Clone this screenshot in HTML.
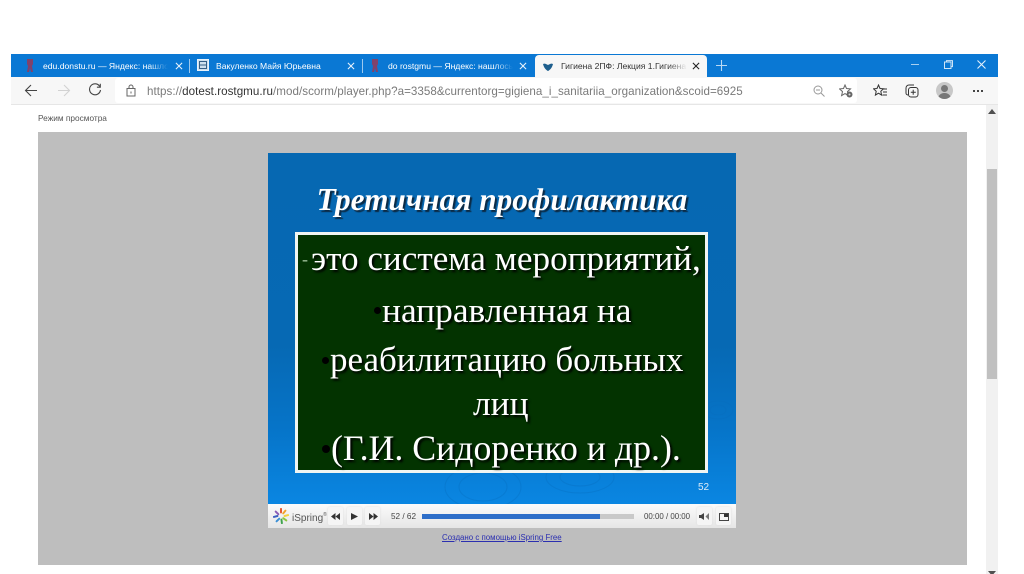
<!DOCTYPE html>
<html lang="ru">
<head>
<meta charset="utf-8">
<title>Третичная профилактика</title>
<style>
html,body{margin:0;padding:0;background:#fff;}
#p{position:relative;width:1024px;height:574px;overflow:hidden;background:#fff;font-family:"Liberation Sans","Noto Sans CJK SC",sans-serif;filter:blur(.35px);}
#p div,#p span.a,#p svg{position:absolute;}
.t{white-space:nowrap;}
.fade{-webkit-mask-image:linear-gradient(90deg,#000 85%,transparent);mask-image:linear-gradient(90deg,#000 85%,transparent);}
.serif{font-family:"Liberation Serif","Noto Serif CJK SC",serif;}
.line{color:#fff;line-height:40px;white-space:nowrap;text-shadow:2px 2px 2px #000;}
.btn{background:#f5f5f5;border-radius:2px;box-shadow:0 0 2px #ddd;}
</style>
</head>
<body>
<div id="p">
  <!-- tab strip -->
  <div style="left:11px;top:54px;width:987px;height:23px;background:#0a78d4;"></div>
  <!-- active tab -->
  <div style="left:535px;top:55px;width:172px;height:22px;background:#f7f7f7;border-radius:4px 4px 0 0;"></div>

  <!-- tab 1 -->
  <svg style="left:25px;top:58px;" width="10" height="15" viewBox="0 0 10 15"><path d="M2 1h6v5l-1 2 1 6H6L5 10 4 14H2l1-6-1-2z" fill="#a83048" opacity=".75"/></svg>
  <div class="t fade" style="left:43px;top:60px;width:125px;overflow:hidden;font-size:8.6px;line-height:12px;color:#fff;">edu.donstu.ru — Яндекс: нашло</div>
  <svg style="left:175px;top:62px;" width="8" height="8" viewBox="0 0 9 9"><path d="M1 1l7 7M8 1L1 8" stroke="#e8f2fb" stroke-width="1.2"/></svg>
  <div style="left:189px;top:59px;width:1px;height:14px;background:#9cc8ee;"></div>

  <!-- tab 2 -->
  <svg style="left:197px;top:59px;" width="12" height="12" viewBox="0 0 12 12"><rect x=".5" y=".5" width="11" height="11" fill="#cfe0ee" stroke="#e8f2fb"/><rect x="2.5" y="2.5" width="7" height="7" fill="none" stroke="#355f86"/><path d="M3 6h6" stroke="#355f86"/></svg>
  <div class="t" style="left:216px;top:60px;font-size:8.6px;line-height:12px;color:#fff;">Вакуленко Майя Юрьевна</div>
  <svg style="left:347px;top:62px;" width="8" height="8" viewBox="0 0 9 9"><path d="M1 1l7 7M8 1L1 8" stroke="#e8f2fb" stroke-width="1.2"/></svg>
  <div style="left:362px;top:59px;width:1px;height:14px;background:#9cc8ee;"></div>

  <!-- tab 3 -->
  <svg style="left:370px;top:58px;" width="10" height="15" viewBox="0 0 10 15"><path d="M2 1h6v5l-1 2 1 6H6L5 10 4 14H2l1-6-1-2z" fill="#a83048" opacity=".75"/></svg>
  <div class="t fade" style="left:388px;top:60px;width:125px;overflow:hidden;font-size:8.6px;line-height:12px;color:#fff;">do rostgmu — Яндекс: нашлось</div>
  <svg style="left:519px;top:62px;" width="8" height="8" viewBox="0 0 9 9"><path d="M1 1l7 7M8 1L1 8" stroke="#e8f2fb" stroke-width="1.2"/></svg>

  <!-- tab 4 -->
  <svg style="left:543px;top:62px;" width="10" height="9" viewBox="0 0 10 9"><path d="M0 2c2-1 3 0 5 1 2-1 3-2 5-1-1 4-3 6-5 7C3 8 1 6 0 2z" fill="#1e5f8e"/></svg>
  <div class="t fade" style="left:561px;top:60px;width:126px;overflow:hidden;font-size:8.6px;line-height:12px;color:#333;">Гигиена 2ПФ: Лекция 1.Гигиена</div>
  <svg style="left:692px;top:62px;" width="8" height="8" viewBox="0 0 9 9"><path d="M1 1l7 7M8 1L1 8" stroke="#222" stroke-width="1.2"/></svg>
  <svg style="left:716px;top:60px;" width="11" height="11" viewBox="0 0 11 11"><path d="M5.5 0v11M0 5.5h11" stroke="#b9d9f3" stroke-width="1.1"/></svg>

  <!-- window controls -->
  <div style="left:911px;top:64px;width:8px;height:1px;background:#a9d0f0;"></div>
  <svg style="left:944px;top:60px;" width="9" height="9" viewBox="0 0 9 9"><rect x=".5" y="2" width="6.5" height="6.5" fill="none" stroke="#cfe4f6"/><path d="M2.5 2V.6h6v6H7" fill="none" stroke="#cfe4f6"/></svg>
  <svg style="left:977px;top:60px;" width="9" height="9" viewBox="0 0 9 9"><path d="M.5.5l8 8M8.500.5l-8 8" stroke="#e3f0fb" stroke-width="1.1"/></svg>

  <!-- toolbar -->
  <div style="left:11px;top:77px;width:987px;height:27px;background:#f7f7f7;border-bottom:1px solid #e6e6e6;"></div>
  <div style="left:115px;top:78px;width:742px;height:25px;background:#fff;border-radius:3px;"></div>
  <svg style="left:24px;top:84px;" width="14" height="13" viewBox="0 0 14 13"><path d="M13 6.500H1.500M7 1 1.500 6.500 7 12" fill="none" stroke="#444" stroke-width="1.1"/></svg>
  <svg style="left:57px;top:84px;" width="14" height="13" viewBox="0 0 14 13"><path d="M1 6.500h11.500M7 1l5.500 5.500L7 12" fill="none" stroke="#d2d2d2" stroke-width="1.1"/></svg>
  <svg style="left:88px;top:83px;" width="14" height="14" viewBox="0 0 14 14"><path d="M11.800 3.500A5.500 5.500 0 1 0 12.500 7" fill="none" stroke="#444" stroke-width="1.1"/><path d="M12.300 .8v3.400H8.900" fill="none" stroke="#444" stroke-width="1.1"/></svg>
  <svg style="left:126px;top:84px;" width="10" height="13" viewBox="0 0 10 13"><rect x="1" y="4.500" width="8" height="7.500" fill="none" stroke="#666"/><path d="M3 4.500V3a2 2 0 0 1 4 0v1.500" fill="none" stroke="#666"/><rect x="4.500" y="7.500" width="1" height="2" fill="#666"/></svg>
  <div class="t" style="left:147px;top:84px;font-size:11.6px;line-height:15px;color:#7a7a7a;letter-spacing:.04px;">https://<span style="color:#333;">dotest.rostgmu.ru</span>/mod/scorm/player.php?a=3358&amp;currentorg=gigiena_i_sanitariia_organization&amp;scoid=6925</div>

  <!-- toolbar icons -->
  <svg style="left:813px;top:85px;" width="12" height="12" viewBox="0 0 12 12"><circle cx="5" cy="5" r="4" fill="none" stroke="#999"/><path d="M8 8l3.500 3.500M3 5h4" stroke="#999"/></svg>
  <svg style="left:839px;top:84px;" width="14" height="14" viewBox="0 0 14 14"><path d="M6 1l1.500 3.500 4 .4-3 2.700.9 4-3.400-2-3.400 2 .9-4-3-2.700 4-.4z" fill="none" stroke="#666"/><circle cx="10.500" cy="10.500" r="3" fill="#666"/><circle cx="10.500" cy="10.500" r="1" fill="#ddd"/></svg>
  <svg style="left:873px;top:84px;" width="14" height="14" viewBox="0 0 14 14"><path d="M5.500 1 7 4.500l3.500.3-2.700 2.500.8 3.800-3.100-1.900-3.100 1.900.8-3.800L.5 4.800 4 4.500z" fill="none" stroke="#333"/><path d="M9.500 5H14M10 8h4M9.500 11H14" stroke="#333" stroke-width=".9"/></svg>
  <svg style="left:905px;top:84px;" width="14" height="14" viewBox="0 0 14 14"><path d="M3 11a2 2 0 0 1-2-2V4a3 3 0 0 1 3-3h5" fill="none" stroke="#333"/><rect x="3.500" y="3.500" width="9.500" height="9.500" rx="2.500" fill="none" stroke="#333"/><path d="M8.200 5.800v5M5.800 8.200h5" stroke="#333"/></svg>
  <div style="left:936px;top:82px;width:17px;height:17px;border-radius:50%;background:#c8c8c8;overflow:hidden;">
    <div style="left:5px;top:3px;width:7px;height:7px;border-radius:50%;background:#777;"></div>
    <div style="left:2px;top:11px;width:13px;height:8px;border-radius:6px 6px 0 0;background:#777;"></div>
  </div>
  <div style="left:973px;top:90px;width:2px;height:2px;background:#444;box-shadow:4px 0 0 #444,8px 0 0 #444;"></div>

  <!-- page -->
  <div class="t" style="left:38px;top:112px;font-size:8.300px;line-height:12px;color:#555;">Режим просмотра</div>

  <!-- scrollbar -->
  <div style="left:986px;top:105px;width:12px;height:469px;background:#f1f1f1;"></div>
  <div style="left:987px;top:169px;width:10px;height:210px;background:#c0c0c0;"></div>
  <svg style="left:988px;top:109px;" width="8" height="5" viewBox="0 0 8 5"><path d="M4 0 8 5H0z" fill="#505050"/></svg>
  <svg style="left:988px;top:571px;" width="8" height="3" viewBox="0 0 8 3"><path d="M0 0h8L5.500 3h-3z" fill="#505050"/></svg>

  <!-- player background -->
  <div style="left:38px;top:132px;width:929px;height:433px;background:#bebebe;"></div>

  <!-- slide -->
  <div style="left:268px;top:153px;width:468px;height:351px;overflow:hidden;background:linear-gradient(180deg,#0668b2 0%,#0669b4 55%,#0674c8 78%,#0a86e2 100%);">
    <svg style="left:0;top:0;" width="468" height="351" viewBox="0 0 468 351" fill="none" stroke="#0a6cbc" stroke-opacity=".35">
      <ellipse cx="215" cy="334" rx="24" ry="14"/><ellipse cx="215" cy="334" rx="38" ry="22"/>
      <ellipse cx="312" cy="324" rx="20" ry="9"/><ellipse cx="312" cy="324" rx="34" ry="16"/>
      <ellipse cx="450" cy="257" rx="8" ry="5"/><ellipse cx="450" cy="257" rx="15" ry="9"/>
    </svg>
    <div class="t serif" style="left:0;width:468px;top:27px;text-align:center;font-size:31.3px;line-height:40px;font-weight:bold;font-style:italic;color:#fff;text-shadow:2px 2px 1px #0c2a44;">Третичная профилактика</div>
    <div style="left:27px;top:79px;width:407px;height:235px;border:3px solid #f1f5f2;background:#033300;"></div>
    <div class="t" style="left:430px;top:329px;font-size:10px;line-height:12px;color:#dcebf7;">52</div>

    <div class="line serif" style="left:34px;top:86px;font-size:18px;color:#9fc09a;text-shadow:none;">-</div>
    <div class="line serif" style="left:43px;top:86px;font-size:35.15px;">это система мероприятий,</div>
    <div class="line serif" style="left:114px;top:137px;font-size:35.4px;"><span style="position:absolute;left:-8px;top:17px;width:7px;height:7px;border-radius:50%;background:#000;"></span>направленная на</div>
    <div class="line serif" style="left:62px;top:187px;font-size:35px;"><span style="position:absolute;left:-8px;top:17px;width:7px;height:7px;border-radius:50%;background:#000;"></span>реабилитацию больных</div>
    <div class="line serif" style="left:205px;top:230px;font-size:35.4px;">лиц</div>
    <div class="line serif" style="left:63px;top:275px;font-size:35.8px;"><span style="position:absolute;left:-9px;top:17px;width:8px;height:8px;border-radius:50%;background:#000;"></span>(Г.И. Сидоренко и др.).</div>
  </div>

  <!-- control bar -->
  <div style="left:268px;top:504px;width:468px;height:24px;background:linear-gradient(180deg,#fbfbfb,#e6e6e6);"></div>
  <svg style="left:273px;top:508px;" width="16" height="16" viewBox="0 0 18 18" stroke-width="2.200" stroke-linecap="round">
    <path d="M9 1v4" stroke="#e4572e"/><path d="M14 3l-2.500 3" stroke="#f2a32a"/><path d="M17 8l-4 1" stroke="#f4d03f"/>
    <path d="M15 14l-3.500-2.500" stroke="#8cc63f"/><path d="M10 17l-.5-4" stroke="#3fa34d"/><path d="M4 15l3-3" stroke="#3b8fd6"/>
    <path d="M1 10l4-1" stroke="#3b5fc0"/><path d="M3 4l3 3" stroke="#8a5bb5"/>
  </svg>
  <div class="t" style="left:292px;top:508px;font-size:10px;line-height:14px;color:#555;">iSpring<span style="font-size:5px;vertical-align:5px;">®</span></div>

  <div class="btn" style="left:328px;top:507px;width:15px;height:18px;"></div>
  <div class="btn" style="left:347px;top:507px;width:15px;height:18px;"></div>
  <div class="btn" style="left:365px;top:507px;width:15px;height:18px;"></div>
  <svg style="left:331px;top:513px;" width="9" height="7" viewBox="0 0 9 7"><path d="M4.500 0v7L0 3.500zM9 0v7L4.500 3.500z" fill="#333"/></svg>
  <svg style="left:351px;top:513px;" width="7" height="7" viewBox="0 0 7 7"><path d="M0 0v7l7-3.500z" fill="#333"/></svg>
  <svg style="left:369px;top:513px;" width="9" height="7" viewBox="0 0 9 7"><path d="M0 0v7l4.500-3.500zM4.500 0v7L9 3.500z" fill="#333"/></svg>

  <div class="t" style="left:391px;top:511px;font-size:8.200px;line-height:11px;color:#444;">52 / 62</div>
  <div style="left:422px;top:514px;width:212px;height:5px;background:#c9c9c9;"></div>
  <div style="left:422px;top:514px;width:178px;height:5px;background:#2f6fc9;"></div>
  <div class="t" style="left:644px;top:511px;font-size:7.900px;line-height:11px;color:#444;">00:00 / 00:00</div>

  <div class="btn" style="left:697px;top:507px;width:15px;height:18px;"></div>
  <div class="btn" style="left:716px;top:507px;width:15px;height:18px;"></div>
  <svg style="left:699px;top:513px;" width="11" height="7" viewBox="0 0 11 7"><path d="M0 2h2l3-2v7L2 5H0z" fill="#444"/><path d="M10 0 6.500 3.500 10 7z" fill="#777"/></svg>
  <svg style="left:719px;top:513px;" width="10" height="8" viewBox="0 0 10 8"><rect x=".5" y=".5" width="9" height="7" fill="none" stroke="#444"/><rect x="5" y="1" width="4" height="3" fill="#333"/></svg>

  <div class="t" style="left:442px;top:533px;font-size:7.900px;line-height:10px;color:#2b2fb0;text-decoration:underline;">Создано с помощью iSpring Free</div>
</div>
</body>
</html>
